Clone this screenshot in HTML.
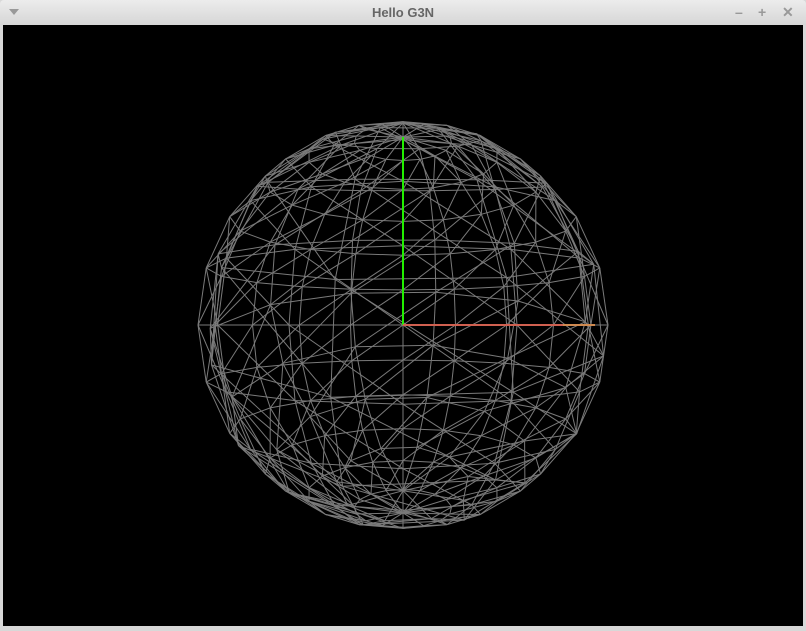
<!DOCTYPE html>
<html><head><meta charset="utf-8"><style>
html,body{margin:0;padding:0;width:806px;height:628px;overflow:hidden;background:#d8d8d8;font-family:"Liberation Sans",sans-serif}
#tb{position:absolute;left:0;top:0;width:806px;height:25px;background:linear-gradient(#ececec,#d6d6d6);border-radius:4px 4px 0 0}
#title{position:absolute;left:0;right:0;top:5px;text-align:center;font-size:13px;font-weight:bold;color:#666}
#view{position:absolute;left:3px;top:25px;width:800px;height:601px;background:#000}
.b{position:absolute;top:4px;color:#999;font-size:14px;font-weight:bold}
</style></head><body>
<div id="tb"><div id="title">Hello G3N</div>
<div style="position:absolute;left:9px;top:9px;width:0;height:0;border-left:5px solid transparent;border-right:5px solid transparent;border-top:6px solid #999"></div>
<div class="b" style="left:735px">–</div><div class="b" style="left:758px">+</div><div class="b" style="left:782px">✕</div>
</div>
<div id="view"><svg id="s" width="800" height="601" xmlns="http://www.w3.org/2000/svg"></svg></div>
<script>
var svg=document.getElementById('s');
var cx=400,cy=300,D=2.5,f=205*Math.sqrt(D*D-1);
var out='';
function proj(p){var z=D-p[2];return [cx+f*p[0]/z,cy-f*p[1]/z];}
function rot(p,a,b){var x=p[0]*Math.cos(a)+p[2]*Math.sin(a),z=-p[0]*Math.sin(a)+p[2]*Math.cos(a),y=p[1];
var y2=y*Math.cos(b)-z*Math.sin(b),z2=y*Math.sin(b)+z*Math.cos(b);return [x,y2,z2];}
function line(a,b){var A=proj(a),B=proj(b);out+='<line x1="'+A[0].toFixed(1)+'" y1="'+A[1].toFixed(1)+'" x2="'+B[0].toFixed(1)+'" y2="'+B[1].toFixed(1)+'"/>';}
function sphere(W,H,ra,rb,diag){
var V=[];for(var i=0;i<=H;i++){var th=Math.PI*i/H;var row=[];for(var j=0;j<=W;j++){var ph=2*Math.PI*j/W;
row.push(rot([Math.sin(th)*Math.cos(ph),Math.cos(th),Math.sin(th)*Math.sin(ph)],ra,rb));}V.push(row);}
for(var i=0;i<H;i++)for(var j=0;j<W;j++){
if(i>0)line(V[i][j],V[i][j+1]);line(V[i][j],V[i+1][j]);if(diag&&i>0&&i<H-1)line(V[i][j+1],V[i+1][j]);}
}
sphere(16,12,0,0,true);
sphere(10,8,0.7,0.25,true);
svg.innerHTML='<g stroke="#7a7a7a" stroke-width="1" fill="none">'+out+'</g>'+
'<line x1="400" y1="112" x2="400" y2="300" stroke="#22ee00" stroke-width="2"/>'+
'<line x1="400" y1="300" x2="592" y2="300" stroke="#d06050" stroke-width="2"/>'+
'<line x1="560" y1="300" x2="592" y2="300" stroke="#d08a50" stroke-width="2"/>';
</script>
</body></html>
